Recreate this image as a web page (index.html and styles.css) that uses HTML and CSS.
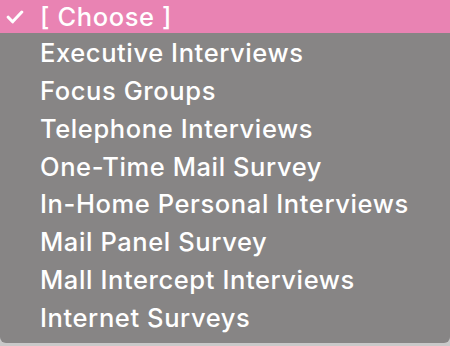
FILE: index.html
```html
<!DOCTYPE html>
<html>
<head>
<meta charset="utf-8">
<link rel="stylesheet" href="styles.css">
</head>
<body>
<div class="menu">
  <div class="item selected">
    <svg class="check" width="18" height="14" viewBox="0 0 18 14"><path d="M2.2 7.2 L6.6 11.8 L15.8 2" fill="none" stroke="#fff" stroke-width="3" stroke-linecap="round" stroke-linejoin="round"/></svg>
    <span class="label">[ Choose ]</span>
  </div>
  <div class="item"><span class="label">Executive Interviews</span></div>
  <div class="item"><span class="label">Focus Groups</span></div>
  <div class="item"><span class="label">Telephone Interviews</span></div>
  <div class="item"><span class="label">One-Time Mail Survey</span></div>
  <div class="item"><span class="label">In-Home Personal Interviews</span></div>
  <div class="item"><span class="label">Mail Panel Survey</span></div>
  <div class="item"><span class="label">Mall Intercept Interviews</span></div>
  <div class="item"><span class="label">Internet Surveys</span></div>
</div>
</body>
</html>
```
FILE: styles.css
```css
html, body {
  margin: 0;
  padding: 0;
  background: #c9c9c9;
  width: 450px;
  height: 346px;
  overflow: hidden;
}
.menu {
  width: 450px;
  height: 343px;
  background: #878585;
  border-radius: 0 0 6px 6px;
  overflow: hidden;
  font-family: Inter, "Noto Sans", sans-serif;
  font-size: 25.5px;
  font-weight: 500;
  letter-spacing: 0.6px;
  color: #fff;
}
.item {
  height: 37.75px;
  display: flex;
  align-items: center;
  padding-left: 40px;
  position: relative;
  box-sizing: border-box;
  padding-top: 2px;
}
.item.selected {
  height: 33px;
  background: #e983b3;
  padding-top: 0;
}
.check {
  position: absolute;
  left: 6px;
  top: 10px;
}
.label {
  white-space: nowrap;
}
```
